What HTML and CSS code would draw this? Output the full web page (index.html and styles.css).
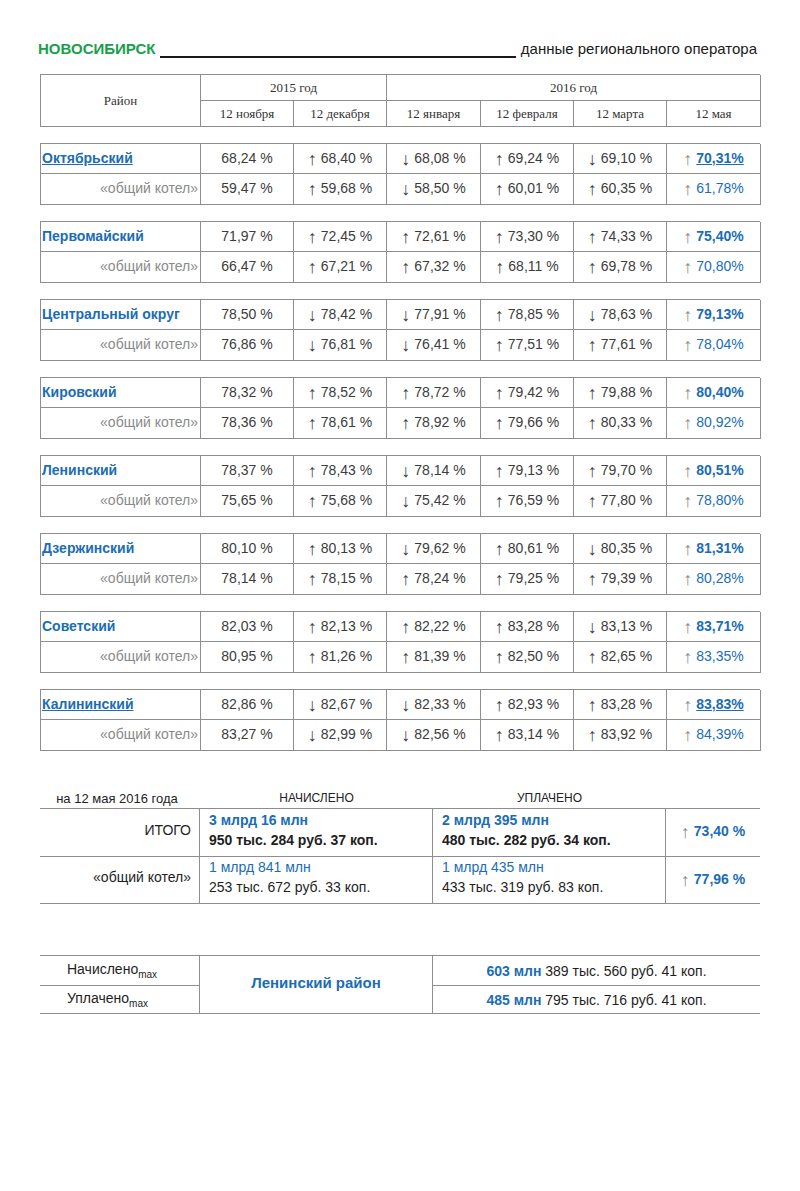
FILE: index.html
```html
<!DOCTYPE html>
<html lang="ru">
<head>
<meta charset="utf-8">
<title>Новосибирск</title>
<link rel="stylesheet" href="styles.css">
</head>
<body>
<div class="page">
  <div class="title">
    <span class="city">НОВОСИБИРСК</span>
    <span class="rule"></span>
    <span class="source">данные регионального оператора</span>
  </div>

  <div class="grid head">
    <div class="c hc district-h">Район</div>
    <div class="c hc y2015">2015 год</div>
    <div class="c hc y2016">2016 год</div>
    <div class="c hc">12 ноября</div>
    <div class="c hc">12 декабря</div>
    <div class="c hc">12 января</div>
    <div class="c hc">12 февраля</div>
    <div class="c hc">12 марта</div>
    <div class="c hc">12 мая</div>
  </div>

  <div class="grid block">
    <div class="c name"><span class="u">Октябрьский</span></div>
    <div class="c v">68,24 %</div><div class="c v"><span class="a">↑</span>68,40 %</div><div class="c v"><span class="a">↓</span>68,08 %</div><div class="c v"><span class="a">↑</span>69,24 %</div><div class="c v"><span class="a">↓</span>69,10 %</div>
    <div class="c last b"><span class="a ar">↑</span><span class="u">70,31%</span></div>
    <div class="c sub">«общий котел»</div>
    <div class="c v">59,47 %</div><div class="c v"><span class="a">↑</span>59,68 %</div><div class="c v"><span class="a">↓</span>58,50 %</div><div class="c v"><span class="a">↑</span>60,01 %</div><div class="c v"><span class="a">↑</span>60,35 %</div>
    <div class="c last"><span class="a ar">↑</span>61,78%</div>
  </div>

  <div class="grid block">
    <div class="c name">Первомайский</div>
    <div class="c v">71,97 %</div><div class="c v"><span class="a">↑</span>72,45 %</div><div class="c v"><span class="a">↑</span>72,61 %</div><div class="c v"><span class="a">↑</span>73,30 %</div><div class="c v"><span class="a">↑</span>74,33 %</div>
    <div class="c last b"><span class="a ar">↑</span>75,40%</div>
    <div class="c sub">«общий котел»</div>
    <div class="c v">66,47 %</div><div class="c v"><span class="a">↑</span>67,21 %</div><div class="c v"><span class="a">↑</span>67,32 %</div><div class="c v"><span class="a">↑</span>68,11 %</div><div class="c v"><span class="a">↑</span>69,78 %</div>
    <div class="c last"><span class="a ar">↑</span>70,80%</div>
  </div>

  <div class="grid block">
    <div class="c name">Центральный округ</div>
    <div class="c v">78,50 %</div><div class="c v"><span class="a">↓</span>78,42 %</div><div class="c v"><span class="a">↓</span>77,91 %</div><div class="c v"><span class="a">↑</span>78,85 %</div><div class="c v"><span class="a">↓</span>78,63 %</div>
    <div class="c last b"><span class="a ar">↑</span>79,13%</div>
    <div class="c sub">«общий котел»</div>
    <div class="c v">76,86 %</div><div class="c v"><span class="a">↓</span>76,81 %</div><div class="c v"><span class="a">↓</span>76,41 %</div><div class="c v"><span class="a">↑</span>77,51 %</div><div class="c v"><span class="a">↑</span>77,61 %</div>
    <div class="c last"><span class="a ar">↑</span>78,04%</div>
  </div>

  <div class="grid block">
    <div class="c name">Кировский</div>
    <div class="c v">78,32 %</div><div class="c v"><span class="a">↑</span>78,52 %</div><div class="c v"><span class="a">↑</span>78,72 %</div><div class="c v"><span class="a">↑</span>79,42 %</div><div class="c v"><span class="a">↑</span>79,88 %</div>
    <div class="c last b"><span class="a ar">↑</span>80,40%</div>
    <div class="c sub">«общий котел»</div>
    <div class="c v">78,36 %</div><div class="c v"><span class="a">↑</span>78,61 %</div><div class="c v"><span class="a">↑</span>78,92 %</div><div class="c v"><span class="a">↑</span>79,66 %</div><div class="c v"><span class="a">↑</span>80,33 %</div>
    <div class="c last"><span class="a ar">↑</span>80,92%</div>
  </div>

  <div class="grid block">
    <div class="c name">Ленинский</div>
    <div class="c v">78,37 %</div><div class="c v"><span class="a">↑</span>78,43 %</div><div class="c v"><span class="a">↓</span>78,14 %</div><div class="c v"><span class="a">↑</span>79,13 %</div><div class="c v"><span class="a">↑</span>79,70 %</div>
    <div class="c last b"><span class="a ar">↑</span>80,51%</div>
    <div class="c sub">«общий котел»</div>
    <div class="c v">75,65 %</div><div class="c v"><span class="a">↑</span>75,68 %</div><div class="c v"><span class="a">↓</span>75,42 %</div><div class="c v"><span class="a">↑</span>76,59 %</div><div class="c v"><span class="a">↑</span>77,80 %</div>
    <div class="c last"><span class="a ar">↑</span>78,80%</div>
  </div>

  <div class="grid block">
    <div class="c name">Дзержинский</div>
    <div class="c v">80,10 %</div><div class="c v"><span class="a">↑</span>80,13 %</div><div class="c v"><span class="a">↓</span>79,62 %</div><div class="c v"><span class="a">↑</span>80,61 %</div><div class="c v"><span class="a">↓</span>80,35 %</div>
    <div class="c last b"><span class="a ar">↑</span>81,31%</div>
    <div class="c sub">«общий котел»</div>
    <div class="c v">78,14 %</div><div class="c v"><span class="a">↑</span>78,15 %</div><div class="c v"><span class="a">↑</span>78,24 %</div><div class="c v"><span class="a">↑</span>79,25 %</div><div class="c v"><span class="a">↑</span>79,39 %</div>
    <div class="c last"><span class="a ar">↑</span>80,28%</div>
  </div>

  <div class="grid block">
    <div class="c name">Советский</div>
    <div class="c v">82,03 %</div><div class="c v"><span class="a">↑</span>82,13 %</div><div class="c v"><span class="a">↑</span>82,22 %</div><div class="c v"><span class="a">↑</span>83,28 %</div><div class="c v"><span class="a">↓</span>83,13 %</div>
    <div class="c last b"><span class="a ar">↑</span>83,71%</div>
    <div class="c sub">«общий котел»</div>
    <div class="c v">80,95 %</div><div class="c v"><span class="a">↑</span>81,26 %</div><div class="c v"><span class="a">↑</span>81,39 %</div><div class="c v"><span class="a">↑</span>82,50 %</div><div class="c v"><span class="a">↑</span>82,65 %</div>
    <div class="c last"><span class="a ar">↑</span>83,35%</div>
  </div>

  <div class="grid block">
    <div class="c name"><span class="u">Калининский</span></div>
    <div class="c v">82,86 %</div><div class="c v"><span class="a">↓</span>82,67 %</div><div class="c v"><span class="a">↓</span>82,33 %</div><div class="c v"><span class="a">↑</span>82,93 %</div><div class="c v"><span class="a">↑</span>83,28 %</div>
    <div class="c last b"><span class="a ar">↑</span><span class="u">83,83%</span></div>
    <div class="c sub">«общий котел»</div>
    <div class="c v">83,27 %</div><div class="c v"><span class="a">↓</span>82,99 %</div><div class="c v"><span class="a">↓</span>82,56 %</div><div class="c v"><span class="a">↑</span>83,14 %</div><div class="c v"><span class="a">↑</span>83,92 %</div>
    <div class="c last"><span class="a ar">↑</span>84,39%</div>
  </div>

  <div class="sum-head">
    <div class="sh-date">на 12 мая 2016 года</div>
    <div class="sh-col">НАЧИСЛЕНО</div>
    <div class="sh-col">УПЛАЧЕНО</div>
    <div></div>
  </div>
  <div class="sum">
    <div class="s slabel">ИТОГО</div>
    <div class="s smoney bold"><span class="blue">3 млрд 16 млн</span><span>950 тыс. 284 руб. 37 коп.</span></div>
    <div class="s smoney bold"><span class="blue">2 млрд 395 млн</span><span>480 тыс. 282 руб. 34 коп.</span></div>
    <div class="s spct"><span class="a ar">↑</span>73,40 %</div>
    <div class="s slabel">«общий котел»</div>
    <div class="s smoney"><span class="blue">1 млрд 841 млн</span><span>253 тыс. 672 руб. 33 коп.</span></div>
    <div class="s smoney"><span class="blue">1 млрд 435 млн</span><span>433 тыс. 319 руб. 83 коп.</span></div>
    <div class="s spct"><span class="a ar">↑</span>77,96 %</div>
  </div>

  <div class="maxt">
    <div class="m mlabel"><span>Начислено<sub>max</sub></span></div>
    <div class="m mdist">Ленинский район</div>
    <div class="m mval"><span><b class="blue">603 млн</b> 389 тыс. 560 руб. 41 коп.</span></div>
    <div class="m mlabel"><span>Уплачено<sub>max</sub></span></div>
    <div class="m mval"><span><b class="blue">485 млн</b> 795 тыс. 716 руб. 41 коп.</span></div>
  </div>
</div>
</body>
</html>
```

FILE: styles.css
```css
* { box-sizing: border-box; }
html, body { margin: 0; padding: 0; background: #fff; }
body {
  font-family: "Liberation Sans", Arial, sans-serif;
  color: #3c3c3c;
  width: 800px;
  height: 1191px;
}
.page {
  padding: 39px 0 0 40px;
}

/* title */
.title {
  display: flex;
  align-items: flex-end;
  width: 719px;
  margin-left: -2px;
  height: 19px;
}
.city {
  color: #18a04a;
  font-weight: bold;
  font-size: 15px;
  line-height: 18px;
}
.rule {
  flex: 1;
  height: 2px;
  background: #1a1a1a;
  margin: 0 5px 0 5px;
}
.source {
  color: #1a1a1a;
  font-size: 15px;
  line-height: 18px;
}

/* main grids */
.grid {
  display: grid;
  grid-template-columns: 160px 93px 93px 94px 93px 93px 94px;
  width: 720px;
  border-top: 1px solid #8e8e8e;
  border-left: 1px solid #8e8e8e;
}
.c {
  border-right: 1px solid #8e8e8e;
  border-bottom: 1px solid #8e8e8e;
  display: flex;
  align-items: center;
  justify-content: center;
  white-space: nowrap;
}
.head {
  margin-top: 16px;
  grid-template-rows: 26px 26px;
}
.hc {
  font-family: "Liberation Serif", "Times New Roman", serif;
  font-size: 13px;
  color: #333;
}
.district-h { grid-row: span 2; }
.y2015 { grid-column: span 2; }
.y2016 { grid-column: span 4; }

.block {
  margin-top: 16px;
  grid-template-rows: 30px 31px;
}
.v {
  font-size: 14px;
  color: #3c3c3c;
  padding-bottom: 2px;
}
.a {
  font-family: "Liberation Serif", "DejaVu Serif", serif;
  font-size: 18px;
  line-height: 14px;
  font-weight: normal;
  margin-right: 4px;
  position: relative;
  top: 1px;
}
.name {
  justify-content: flex-start;
  padding-left: 1px;
  font-weight: bold;
  font-size: 14px;
  color: #1b6db5;
  padding-bottom: 2px;
}
.sub {
  justify-content: flex-end;
  padding-right: 2px;
  font-size: 14px;
  color: #8a8a8a;
  padding-bottom: 2px;
}
.last {
  font-size: 14px;
  color: #1b6db5;
  padding-bottom: 2px;
}
.last.b { font-weight: bold; }
.ar { color: #8a8a8a; }
.u { text-decoration: underline; }

/* summary */
.sum-head {
  display: grid;
  grid-template-columns: 160px 233px 233px 94px;
  width: 720px;
  margin-top: 37px;
  height: 20px;
  align-items: center;
  color: #222;
}
.sh-date { font-size: 13px; text-align: center; padding-right: 6px; }
.sh-col { font-size: 12px; text-align: center; }
.sum {
  display: grid;
  grid-template-columns: 160px 233px 233px 94px;
  grid-template-rows: 48px 47px;
  width: 720px;
  border-top: 1px solid #8e8e8e;
}
.s {
  border-bottom: 1px solid #8e8e8e;
  border-right: 1px solid #8e8e8e;
  font-size: 14px;
  color: #1e1e1e;
  white-space: nowrap;
}
.s.spct { border-right: none; }
.slabel {
  display: flex;
  align-items: center;
  justify-content: flex-end;
  padding-right: 8px;
  padding-bottom: 6px;
}
.smoney {
  display: flex;
  flex-direction: column;
  justify-content: center;
  padding-left: 9px;
  line-height: 20px;
  padding-bottom: 6px;
}
.bold { font-weight: bold; }
.blue { color: #1b6db5; }
.spct {
  display: flex;
  align-items: center;
  justify-content: center;
  color: #1b6db5;
  font-weight: bold;
  padding-bottom: 3px;
}

/* max table */
.maxt {
  display: grid;
  grid-template-columns: 160px 233px 327px;
  grid-template-rows: 30px 28px;
  width: 720px;
  margin-top: 51px;
  border-top: 1px solid #8e8e8e;
  font-size: 14px;
  color: #1e1e1e;
}
.m {
  border-bottom: 1px solid #8e8e8e;
  display: flex;
  align-items: center;
  white-space: nowrap;
}
.mlabel {
  grid-column: 1;
  border-right: 1px solid #8e8e8e;
  padding-left: 27px;
  padding-bottom: 3px;
}
.mlabel sub {
  font-size: 10px;
  vertical-align: -4px;
  line-height: 0;
}
.mdist {
  grid-column: 2;
  grid-row: 1 / span 2;
  border-right: 1px solid #8e8e8e;
  justify-content: center;
  color: #1b6db5;
  font-weight: bold;
  font-size: 15px;
  padding-bottom: 4px;
}
.mval {
  grid-column: 3;
  justify-content: center;
}
.mval b { font-weight: bold; }
```
